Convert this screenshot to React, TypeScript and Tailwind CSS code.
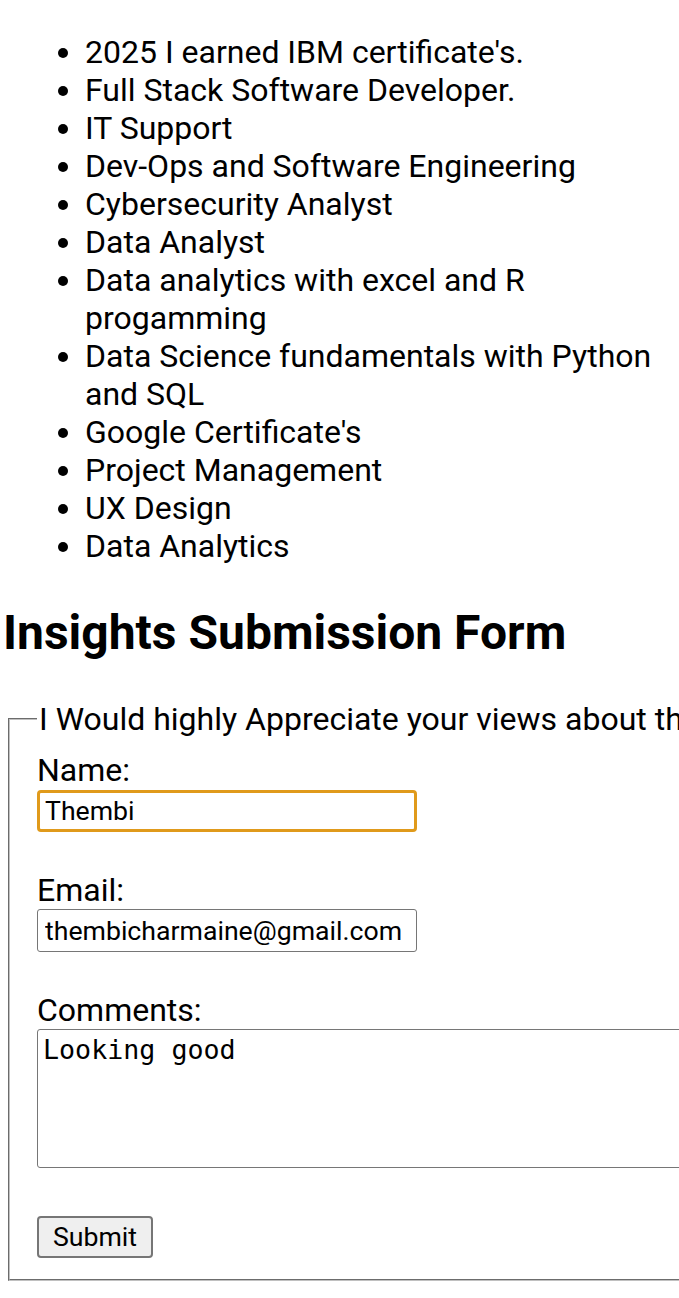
const CERTIFICATES = [
  "2025 I earned IBM certificate's.",
  "Full Stack Software Developer.",
  "IT Support",
  "Dev-Ops and Software Engineering",
  "Cybersecurity Analyst",
  "Data Analyst",
  "Data analytics with excel and R progamming",
  "Data Science fundamentals with Python and SQL",
  "Google Certificate's",
  "Project Management",
  "UX Design",
  "Data Analytics",
];

export default function App() {
  return (
    <div className="w-full overflow-hidden bg-white font-['Roboto',sans-serif] text-[32px] leading-[38px] text-black">
      {/* Certificates */}
      <ul className="mt-[33px] list-disc pl-[85px] pr-[20px]">
        {CERTIFICATES.map((item) => (
          <li key={item}>{item}</li>
        ))}
      </ul>

      <h1 className="mt-[39px] ml-[3px] text-[48px] leading-[57px] font-bold whitespace-nowrap">
        Insights Submission Form
      </h1>

      {/* Form */}
      <form className="mt-[39px]">
        <fieldset className="ml-[8px] w-[900px] border-2 border-[#c0c0c0] [border-style:groove] pl-[27px] pt-[13px] pb-[21px]">
          <legend className="px-[2px] whitespace-nowrap">
            I Would highly Appreciate your views about this website
          </legend>

          <label htmlFor="name" className="block">
            Name:
          </label>
          <input
            id="name"
            type="text"
            defaultValue="Thembi"
            className="mt-[1px] block h-[42px] w-[380px] rounded-[4px] border-[3px] border-[#e09a1b] px-[5px] text-[26.67px] outline-none"
          />

          <label htmlFor="email" className="mt-[39px] block">
            Email:
          </label>
          <input
            id="email"
            type="email"
            defaultValue="thembicharmaine@gmail.com"
            className="block h-[43px] w-[380px] rounded-[3px] border border-[#767676] px-[7px] text-[26.67px] outline-none"
          />

          <label htmlFor="comments" className="mt-[39px] block">
            Comments:
          </label>
          <textarea
            id="comments"
            defaultValue="Looking good"
            className="block h-[139px] w-[700px] resize-none rounded-[3px] border border-[#767676] px-[5px] py-[2px] font-['DejaVu_Sans_Mono',monospace] text-[26.67px] leading-[36px] outline-none"
          />

          <button
            type="submit"
            className="mt-[48px] block h-[42px] rounded-[4px] border-2 border-[#767676] bg-[#efefef] px-[14px] text-[26.67px] leading-none"
          >
            Submit
          </button>
        </fieldset>
      </form>
    </div>
  );
}
